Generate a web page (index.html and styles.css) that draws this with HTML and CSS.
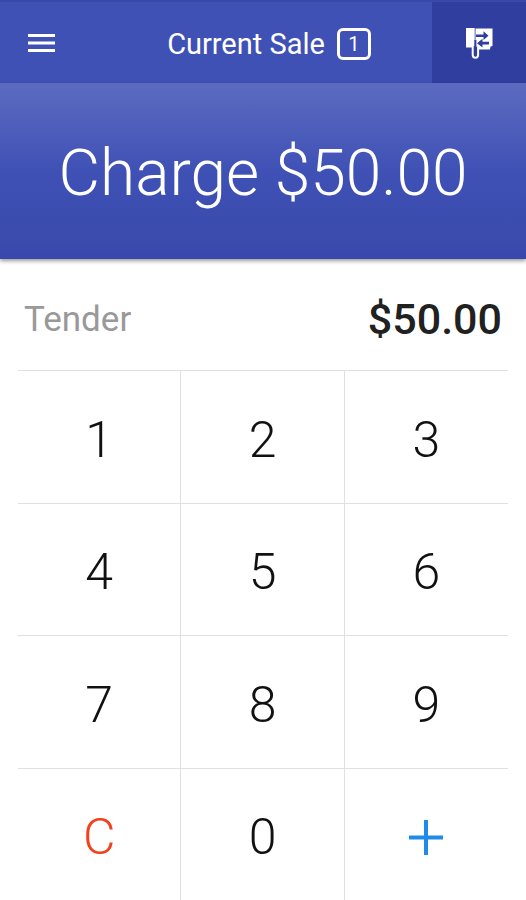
FILE: index.html
```html
<!DOCTYPE html>
<html lang="en">
<head>
<meta charset="utf-8">
<meta name="viewport" content="width=device-width, initial-scale=1">
<title>Current Sale</title>
<link rel="stylesheet" href="styles.css">
</head>
<body>
<main class="register">
  <header class="bar">
    <button class="menu" aria-label="Menu">
      <svg width="27" height="20" viewBox="0 0 27 20"><path d="M0 2.500h27M0 10h27M0 17.500h27" stroke="#fff" stroke-width="3"/></svg>
    </button>
    <a class="sale" href="#sale">Current Sale <span class="count">1</span></a>
    <button class="reader" aria-label="Card reader">
      <svg width="30" height="32" viewBox="0 0 30 32"><path d="M2 1h8.700v19.500H2z" fill="#fff"/><path d="M11.500 1.500H28.500v17.500l-2 .5-.5 3H11.500z" fill="#fff"/><path d="M12 7.400h7.500V4.300l5 4.400-5 4.400V10H12zM25 14.800h-6.500V11.800l-5.500 4.400 5.500 4.400V17.600H25z" fill="#303f9f"/><path d="M8.700 19v9a2.700 2.700 0 0 0 5.400 0V20" fill="#303f9f" stroke="#fff" stroke-width="2"/><path d="M11.400 13v15" stroke="#303f9f" stroke-width="2"/></svg>
    </button>
  </header>
  <button class="charge">Charge $50.00</button>
  <section class="tender"><span class="label">Tender</span><output class="amount">$50.00</output></section>
  <section class="keypad" aria-label="Keypad">
    <button>1</button><button>2</button><button>3</button>
    <button>4</button><button>5</button><button>6</button>
    <button>7</button><button>8</button><button>9</button>
    <button class="clear">C</button><button>0</button>
    <button aria-label="Add"><svg width="34" height="36" viewBox="0 0 34 36"><path d="M17 1v35M0 18.500h34" stroke="#1e8be9" stroke-width="4"/></svg></button>
  </section>
</main>
</body>
</html>
```
FILE: styles.css
```css
* { box-sizing: border-box; }
body { margin: 0; background: #fff; font-family: Roboto, "Liberation Sans", sans-serif; color: #212121; }
button { font: inherit; color: inherit; border: 0; padding: 0; background: none; cursor: pointer; }
svg { display: block; }
.register { display: flex; flex-direction: column; min-height: 100vh; }
.bar { display: grid; grid-template-columns: 106px 1fr 94px; height: 83px; border-top: 2px solid #3849aa; background: #3f51b5; color: #fff; }
.menu { display: flex; align-items: center; padding-left: 28px; }
.sale { display: flex; align-items: center; justify-content: center; gap: 12px; padding-top: 2px; color: #fff; font-size: 29px; text-decoration: none; }
.count { display: flex; align-items: center; justify-content: center; width: 34px; height: 32px; border: 3px solid #fff; border-radius: 6px; font-size: 20px; }
.reader { display: flex; align-items: center; justify-content: center; background: #303f9f; }
.charge { height: 176px; padding-top: 4px; background: linear-gradient(#5c6bc0, #3f51b5 50%, #3949ab); color: #fff; font-size: 64px; font-weight: 300; box-shadow: 0 2px 4px #0006; }
.tender { display: flex; align-items: center; justify-content: space-between; height: 111px; padding: 9px 24px 0; }
.label { font-size: 35px; color: #999; }
.amount { font-size: 43px; font-weight: 500; }
.keypad { display: grid; flex: 1; grid-template-columns: repeat(3, 1fr); grid-auto-rows: 1fr; margin: 0 18px; }
.keypad button { display: flex; align-items: center; justify-content: center; min-height: 132px; padding-top: 6px; border-top: 1px solid #e0e0e0; border-right: 1px solid #e0e0e0; color: #111; font-size: 50px; font-weight: 300; }
.keypad button:nth-child(3n) { border-right: 0; }
.keypad .clear { color: #f5401a; }
```
